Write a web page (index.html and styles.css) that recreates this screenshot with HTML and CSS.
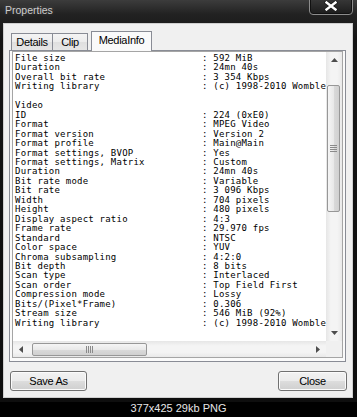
FILE: index.html
```html
<!DOCTYPE html>
<html lang="en">
<head>
    <meta charset="UTF-8">
    <title>Properties</title>
    <link rel="stylesheet" href="styles.css">
</head>
<body>

<div class="window">
    <div class="titlebar">
        <span class="title">Properties</span>
        <button class="close-btn">
            <svg width="14" height="10" viewBox="0 0 14 10">
                <path d="M2.5 1.5 L11.5 8.5 M11.5 1.5 L2.5 8.5" stroke="#1a1a1a" stroke-width="4" stroke-linecap="square"/>
                <path d="M2.5 1.5 L11.5 8.5 M11.5 1.5 L2.5 8.5" stroke="#fff" stroke-width="2.4" stroke-linecap="square"/>
            </svg>
        </button>
    </div>

    <div class="client">
        <div class="tabs">
            <div class="tab tab-details">Details</div>
            <div class="tab tab-clip">Clip</div>
            <div class="tab active">MediaInfo</div>
        </div>

        <div class="panel">
            <div class="textbox">
                <div class="content">
                    <div class="info">
                        <span>File size</span><span>: 592 MiB</span>
                        <span>Duration</span><span>: 24mn 40s</span>
                        <span>Overall bit rate</span><span>: 3 354 Kbps</span>
                        <span>Writing library</span><span>: (c) 1998-2010 Womble</span>
                        <span class="blank"></span>
                        <span class="section">Video</span>
                        <span>ID</span><span>: 224 (0xE0)</span>
                        <span>Format</span><span>: MPEG Video</span>
                        <span>Format version</span><span>: Version 2</span>
                        <span>Format profile</span><span>: Main@Main</span>
                        <span>Format settings, BVOP</span><span>: Yes</span>
                        <span>Format settings, Matrix</span><span>: Custom</span>
                        <span>Duration</span><span>: 24mn 40s</span>
                        <span>Bit rate mode</span><span>: Variable</span>
                        <span>Bit rate</span><span>: 3 096 Kbps</span>
                        <span>Width</span><span>: 704 pixels</span>
                        <span>Height</span><span>: 480 pixels</span>
                        <span>Display aspect ratio</span><span>: 4:3</span>
                        <span>Frame rate</span><span>: 29.970 fps</span>
                        <span>Standard</span><span>: NTSC</span>
                        <span>Color space</span><span>: YUV</span>
                        <span>Chroma subsampling</span><span>: 4:2:0</span>
                        <span>Bit depth</span><span>: 8 bits</span>
                        <span>Scan type</span><span>: Interlaced</span>
                        <span>Scan order</span><span>: Top Field First</span>
                        <span>Compression mode</span><span>: Lossy</span>
                        <span>Bits/(Pixel*Frame)</span><span>: 0.306</span>
                        <span>Stream size</span><span>: 546 MiB (92%)</span>
                        <span>Writing library</span><span>: (c) 1998-2010 Womble</span>
                    </div>
                </div>

                <div class="vscroll">
                    <span class="arrow">
                        <svg width="7" height="4" viewBox="0 0 7 4"><polygon points="3.5,0 7,4 0,4" fill="#4d4d4d"/></svg>
                    </span>
                    <div class="vtrack">
                        <div class="vthumb">
                            <svg width="7" height="7" viewBox="0 0 7 7">
                                <path d="M0 0.5 H7 M0 2.5 H7 M0 4.5 H7 M0 6.5 H7" stroke="#8a8a8a" stroke-width="1"/>
                            </svg>
                        </div>
                    </div>
                    <span class="arrow">
                        <svg width="7" height="4" viewBox="0 0 7 4"><polygon points="0,0 7,0 3.5,4" fill="#4d4d4d"/></svg>
                    </span>
                </div>

                <div class="hscroll">
                    <span class="arrow">
                        <svg width="4" height="7" viewBox="0 0 4 7"><polygon points="4,0 4,7 0,3.5" fill="#4d4d4d"/></svg>
                    </span>
                    <div class="htrack">
                        <div class="hthumb">
                            <svg width="7" height="7" viewBox="0 0 7 7">
                                <path d="M0.5 0 V7 M2.5 0 V7 M4.5 0 V7 M6.5 0 V7" stroke="#8a8a8a" stroke-width="1"/>
                            </svg>
                        </div>
                    </div>
                    <span class="arrow">
                        <svg width="4" height="7" viewBox="0 0 4 7"><polygon points="0,0 4,3.5 0,7" fill="#4d4d4d"/></svg>
                    </span>
                </div>

                <div class="corner"></div>
            </div>
        </div>

        <div class="buttons">
            <button class="btn btn-save">Save As</button>
            <button class="btn btn-close">Close</button>
        </div>
    </div>
</div>

<div class="caption">377x425 29kb PNG</div>

</body>
</html>
```

FILE: styles.css
```css
* {
    box-sizing: border-box;
}

body {
    margin: 0;
    background: #000;
    font-family: "Liberation Sans", Arial, sans-serif;
}

.window {
    width: 357px;
    height: 402px;
    padding: 0 4px 4px 3px;
    display: flex;
    flex-direction: column;
    background: linear-gradient(to bottom, #3c3c3c 0, #222 14px, #141414 40px, #0e0e0e 100%);
}

.titlebar {
    height: 23px;
    flex: none;
    display: flex;
    justify-content: space-between;
    align-items: flex-start;
}

.title {
    padding: 4px 0 0 2px;
    font-size: 10.5px;
    color: #cdcdcd;
    text-shadow: 0 0 5px rgba(255, 255, 255, 0.2);
}

.close-btn {
    width: 44px;
    height: 18px;
    margin-top: -3px;
    padding: 0;
    border: 1px solid #8c8c8c;
    border-radius: 0 0 4px 4px;
    background: linear-gradient(to bottom, #3a3a3a, #1c1c1c);
    box-shadow: inset 0 0 0 1px #111;
    display: flex;
    align-items: center;
    justify-content: center;
}

.client {
    flex: 1;
    display: flex;
    flex-direction: column;
    padding: 7px 6px 0 5px;
    background: #f0f0f0;
    border: 1px solid #cfcfcf;
}

/* tabs */
.tabs {
    display: flex;
    align-items: flex-end;
    padding-left: 2px;
    position: relative;
    z-index: 1;
}

.tab {
    height: 17px;
    padding: 1px 0 0;
    border: 1px solid #898c95;
    border-bottom: none;
    background: linear-gradient(to bottom, #f4f4f4 0, #ececec 50%, #dfdfdf 51%, #e6e6e6 100%);
    font-size: 11px;
    letter-spacing: -0.3px;
    line-height: 15px;
    text-align: center;
    color: #000;
}

.tab-details {
    width: 42px;
}

.tab-clip {
    width: 36px;
    margin-left: -1px;
}

.tab.active {
    width: 61px;
    height: 20px;
    margin-left: 3px;
    margin-bottom: -1px;
    background: #fafafa;
}

.panel {
    height: 312px;
    padding: 0 2px;
    border: 1px solid #898c95;
    background: #fafafa;
}

/* the text box with its scrollbars */
.textbox {
    height: 307px;
    display: grid;
    grid-template-columns: 1fr 16px;
    grid-template-rows: 1fr 16px;
    border: 1px solid #a5a5a5;
    background: #fff;
}

.content {
    min-width: 0;
    overflow: hidden;
    padding: 2px 0 0 2px;
}

.info {
    display: grid;
    grid-template-columns: 187px max-content;
    font-family: "DejaVu Sans Mono", monospace;
    font-size: 9px;
    letter-spacing: 0.22px;
    line-height: 9.45px;
    white-space: pre;
    color: #000;
}

.info .section {
    grid-column: 1 / -1;
}

.info .blank {
    grid-column: 1 / -1;
    height: 9.45px;
}

.arrow {
    flex: none;
    width: 16px;
    height: 16px;
    display: flex;
    align-items: center;
    justify-content: center;
}

.vscroll {
    display: flex;
    flex-direction: column;
    background: linear-gradient(to right, #e6e6e6, #f4f4f4 30%, #f4f4f4 70%, #e9e9e9);
}

.vtrack {
    flex: 1;
    padding: 17px 2px 0 1px;
}

.vthumb {
    height: 127px;
    display: flex;
    align-items: center;
    justify-content: center;
    border: 1px solid #979797;
    border-radius: 2px;
    background: linear-gradient(to right, #f5f5f5 0, #e9e9e9 50%, #dadada 51%, #d0d0d0 100%);
}

.hscroll {
    display: flex;
    background: linear-gradient(to bottom, #e6e6e6, #f4f4f4 30%, #f4f4f4 70%, #e9e9e9);
}

.htrack {
    flex: 1;
    padding: 2px 0 1px 3px;
}

.hthumb {
    width: 115px;
    height: 100%;
    display: flex;
    align-items: center;
    justify-content: center;
    border: 1px solid #979797;
    border-radius: 2px;
    background: linear-gradient(to bottom, #f5f5f5 0, #e9e9e9 50%, #dadada 51%, #d0d0d0 100%);
}

.corner {
    background: #f0f0f0;
}

/* dialog buttons */
.buttons {
    display: flex;
    justify-content: space-between;
    margin: 9px -1px 0 0;
    padding-left: 1px;
}

.btn {
    height: 20px;
    padding: 0;
    border: 1px solid #707070;
    border-radius: 3px;
    background: linear-gradient(to bottom, #f2f2f2 0, #ebebeb 50%, #dddddd 51%, #cfcfcf 100%);
    box-shadow: inset 0 0 0 1px #fbfbfb;
    font-family: "Liberation Sans", Arial, sans-serif;
    font-size: 11px;
    letter-spacing: -0.3px;
    color: #000;
}

.btn-save {
    width: 77px;
}

.btn-close {
    width: 69px;
}

.caption {
    height: 15px;
    text-align: center;
    font-size: 11px;
    line-height: 13px;
    color: #e6e6e6;
}
```
